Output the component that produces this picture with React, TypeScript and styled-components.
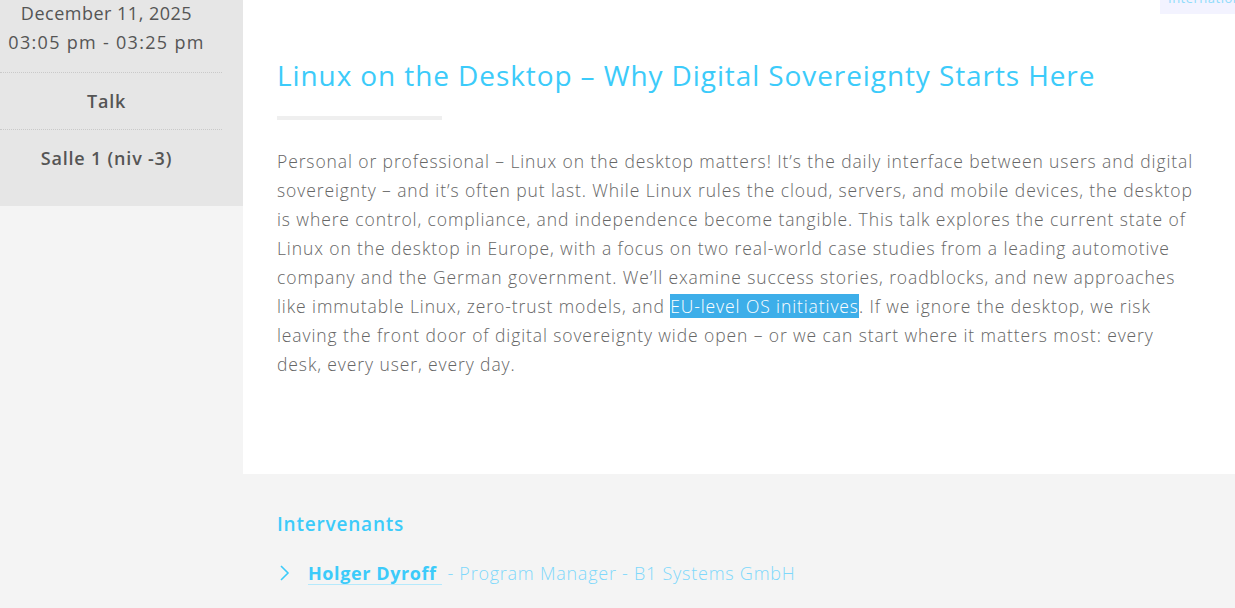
import React from "react";
import styled, { createGlobalStyle } from "styled-components";

const Global = createGlobalStyle`
  html, body { margin: 0; padding: 0; background: #f4f4f4; overflow: hidden; }
  body { font-family: "Open Sans", "Liberation Sans", sans-serif; }
`;

const Page = styled.div`
  display: flex;
  flex-direction: column;
  width: 1235px;
  height: 608px;
  overflow: hidden;
`;

const Top = styled.div`
  display: flex;
  height: 474px;
`;

const Sidebar = styled.aside`
  width: 243px;
  flex: none;
  background: #f4f4f4;
`;

const InfoBox = styled.div`
  background: #e6e6e6;
  height: 207px;
  box-sizing: border-box;
`;

const InfoRow = styled.div<{ $first?: boolean; $last?: boolean }>`
  width: 222px;
  box-sizing: border-box;
  padding: ${(p) => (p.$first ? "0 9px 15px 0" : "14px 9px 13px 0")};
  border-bottom: ${(p) => (p.$last ? "none" : "1px dotted #c9c9c9")};
  text-align: center;
  color: #555;
  font-size: 18px;
  font-weight: ${(p) => (p.$first ? 500 : 600)};
  letter-spacing: 0.8px;
  line-height: 29px;
  margin-top: ${(p) => (p.$first ? "-1px" : "0")};
  white-space: nowrap;
`;

const InfoLine = styled.span<{ $spacing: string }>`
  display: block;
  letter-spacing: ${(p) => p.$spacing};
`;

const Main = styled.main`
  flex: 1;
  background: #fff;
  padding: 0 35px 0 34px;
  display: flex;
  flex-direction: column;
`;

const TagRow = styled.div`
  display: flex;
  justify-content: flex-end;
  margin-right: -35px;
  margin-top: -9px;
  height: 23px;
`;

const Tag = styled.span`
  background: #f3f3ff;
  color: #8fdcfb;
  font-size: 13px;
  line-height: 15px;
  padding: 0 0 8px 8px;
  width: 67px;
  overflow: hidden;
  white-space: nowrap;
  letter-spacing: 0.5px;
`;

const Title = styled.h1`
  margin: 43px 0 0 0;
  font-size: 28px;
  font-weight: 500;
  line-height: 36px;
  color: #3ccbfa;
  letter-spacing: 0.9px;
  white-space: nowrap;
`;

const TitleBar = styled.div`
  width: 165px;
  height: 4px;
  background: #efefef;
  margin-top: 23px;
`;

const Body = styled.p`
  margin: 27px 0 0 0;
  font-size: 17.5px;
  font-weight: 300;
  line-height: 29px;
  color: #666;
  letter-spacing: 0.9px;
`;

const Selected = styled.span`
  background: #3daee9;
  color: #fff;
`;

const Bottom = styled.section`
  flex: 1;
  background: #f4f4f4;
  padding: 36px 0 0 277px;
`;

const SectionTitle = styled.h2`
  margin: 0;
  font-size: 19px;
  font-weight: 600;
  line-height: 28px;
  color: #3ccbfa;
  letter-spacing: 0.8px;
`;

const Speakers = styled.ul`
  list-style: none;
  margin: 21px 0 0 0;
  padding: 0;
`;

const Speaker = styled.li`
  display: flex;
  align-items: center;
  gap: 17px;
  font-size: 18px;
  line-height: 28px;
  color: #7fd8fb;
  font-weight: 300;
  letter-spacing: 0.75px;
`;

const Chevron = styled.svg`
  width: 14px;
  height: 18px;
  flex: none;
`;

const Name = styled.a`
  color: #3ccbfa;
  font-weight: 700;
  letter-spacing: 0.6px;
  text-decoration: underline;
  text-decoration-color: #b5e9fc;
  text-underline-offset: 4px;
  white-space: pre;
`;

export default function App() {
  return (
    <>
      <Global />
      <Page>
        <Top>
          <Sidebar>
            <InfoBox>
              <InfoRow $first>
                <InfoLine $spacing="0.5px">December 11, 2025</InfoLine>
                <InfoLine $spacing="1.3px">03:05 pm - 03:25 pm</InfoLine>
              </InfoRow>
              <InfoRow>Talk</InfoRow>
              <InfoRow $last>Salle 1 (niv -3)</InfoRow>
            </InfoBox>
          </Sidebar>
          <Main>
            <TagRow>
              <Tag>International</Tag>
            </TagRow>
            <Title>Linux on the Desktop – Why Digital Sovereignty Starts Here</Title>
            <TitleBar />
            <Body>
              Personal or professional – Linux on the desktop matters! It’s the daily interface between users and
              digital sovereignty – and it’s often put last. While Linux rules the cloud, servers, and mobile devices,
              the desktop is where control, compliance, and independence become tangible. This talk explores the
              current state of Linux on the desktop in Europe, with a focus on two real-world case studies from a
              leading automotive company and the German government. We’ll examine success stories, roadblocks, and new
              approaches like immutable Linux, zero-trust models, and <Selected>EU-level OS initiatives</Selected>. If
              we ignore the desktop, we risk leaving the front door of digital sovereignty wide open – or we can start
              where it matters most: every desk, every user, every day.
            </Body>
          </Main>
        </Top>
        <Bottom>
          <SectionTitle>Intervenants</SectionTitle>
          <Speakers>
            <Speaker>
              <Chevron viewBox="0 0 14 18">
                <polyline points="4,2 11,9 4,16" fill="none" stroke="#3ccbfa" strokeWidth="1.6" />
              </Chevron>
              <span>
                <Name href="#">Holger Dyroff </Name> - Program Manager - B1 Systems GmbH
              </span>
            </Speaker>
          </Speakers>
        </Bottom>
      </Page>
    </>
  );
}
